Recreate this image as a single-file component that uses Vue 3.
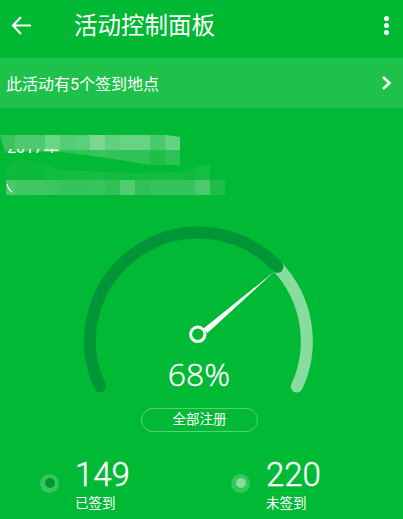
<script setup>
const cell = 15
const upperRows = [
  { y: 135, colors: ['#3cc45f','#4ecb6f','#4ecb6f','#6dd588','#55cd74','#5ad07a','#78d893','#5fd07d','#68d385','#68d385','#48c96a','#65d283'] },
  { y: 150, colors: ['#22bf4c','#2cc254','#2cc254','#35c45b','#2cc254','#30c357','#38c55e','#32c359','#2ec356','#2ec356','#1fbe49','#2cc254'] }
]
const lowerRows = [
  { y: 165, colors: ['#0abb3c','#0cba3b','#0cba3b','#12bc41','#12bc41','#12bc41','#14bd43','#12bc41','#12bc41','#12bc41','#12bc41','#14bd43','#0ebb3e','#14bd43'] },
  { y: 180, colors: ['#4bca6d','#3fc763','#3fc763','#3cc661','#35c45c','#35c45c','#38c55e','#2ec256','#52cc72','#2ec256','#35c45c','#35c45c','#35c45c','#4bca6d','#1fbe49'] }
]
const toBlocks = rows => rows.flatMap(r => r.colors.map((fill, i) => ({ key: `${r.y}-${i}`, x: i * cell, y: r.y - 130, fill })))
const upperBlocks = toBlocks(upperRows)
const lowerBlocks = toBlocks(lowerRows)

const cx = 198.4
const cy = 341
const r = 108.4
const point = deg => {
  const a = (deg - 90) * Math.PI / 180
  return `${(cx + r * Math.cos(a)).toFixed(2)} ${(cy + r * Math.sin(a)).toFixed(2)}`
}
const startDeg = -114.8
const junctionDeg = 46.8
const endDeg = 114.8
const darkArc = `M${point(startDeg)}A${r} ${r} 0 0 1 ${point(junctionDeg)}`
const lightArc = `M${point(junctionDeg)}A${r} ${r} 0 0 1 ${point(endDeg)}`
</script>

<template>
  <div class="page">
    <header class="bar">
      <svg class="back" width="24" height="24" viewBox="0 0 24 24">
        <path d="M21 11.5H3M11 3L3 11.5L11 20" fill="none" stroke="#fff" stroke-width="2.2" />
      </svg>
      <h1 class="title">活动控制面板</h1>
      <div class="dots"><i></i><i></i><i></i></div>
    </header>

    <div class="banner">
      <span>此活动有5个签到地点</span>
      <svg width="12" height="16" viewBox="0 0 12 16">
        <path d="M3 2L9.5 8L3 14" fill="none" stroke="#fff" stroke-width="2.4" />
      </svg>
    </div>

    <svg class="mosaic" width="403" height="70" viewBox="0 0 403 70">
      <defs>
        <clipPath id="mosaic-upper">
          <path d="M0 5H167L180 7V40L133 32L100 27L60 22H5Z" />
        </clipPath>
        <clipPath id="mosaic-lower">
          <path d="M6 65V45C6 36 14 30 22 30L40 32L60 40L133 43L180 42L203 35H210V50H225V65H20Z" />
        </clipPath>
        <clipPath id="text-shape">
          <rect x="0" y="19" width="70" height="4" />
        </clipPath>
      </defs>
      <g clip-path="url(#mosaic-upper)">
        <rect v-for="b in upperBlocks" :key="b.key" :x="b.x" :y="b.y" width="15" height="15" :fill="b.fill" />
      </g>
      <g clip-path="url(#mosaic-lower)">
        <rect x="0" y="28" width="225" height="7" fill="#0cba3b" />
        <rect v-for="b in lowerBlocks" :key="b.key" :x="b.x" :y="b.y" width="15" height="15" :fill="b.fill" />
      </g>
      <text class="hidden-date" x="7" y="23" clip-path="url(#text-shape)">2017年</text>
      <path d="M7 54Q8 59 12 62" fill="none" stroke="#fff" stroke-width="1.2" />
    </svg>

    <svg class="gauge" width="403" height="180" viewBox="0 220 403 180">
      <path :d="lightArc" fill="none" stroke="#88dc9e" stroke-width="12" stroke-linecap="round" />
      <path :d="darkArc" fill="none" stroke="#009638" stroke-width="12" stroke-linecap="round" />
      <polygon points="274.5,271.5 203.5,328.5 207.5,333" fill="#fff" />
      <circle cx="197.8" cy="334.3" r="7.2" fill="#00b934" stroke="#fff" stroke-width="3" />
      <text class="percent" x="199" y="386" text-anchor="middle">68%</text>
    </svg>

    <div class="action"><button class="all">全部注册</button></div>

    <div class="stats">
      <div class="stat">
        <span class="dot dark"></span>
        <div>
          <div class="num">149</div>
          <div class="label">已签到</div>
        </div>
      </div>
      <div class="stat">
        <span class="dot light"></span>
        <div>
          <div class="num">220</div>
          <div class="label">未签到</div>
        </div>
      </div>
    </div>
  </div>
</template>

<style>
html, body { margin: 0; background: #00b934; }
</style>

<style scoped>
.page {
  width: 403px;
  height: 519px;
  overflow: hidden;
  background: #00b934;
  color: #fff;
  font-family: Roboto, "Noto Sans CJK SC", sans-serif;
}
.bar {
  height: 58px;
  display: flex;
  align-items: center;
  padding: 0 14px 6px 10px;
  box-sizing: border-box;
  background: #00b832;
}
.back { flex: none; }
.title {
  flex: 1;
  margin: 0 0 0 40px;
  font-size: 23.5px;
  font-weight: 400;
  line-height: 30px;
}
.dots { display: flex; flex-direction: column; gap: 2px; margin-top: -2px; }
.dots i {
  display: block;
  width: 5px;
  height: 5px;
  border-radius: 50%;
  background: #fff;
}
.banner {
  height: 50px;
  display: flex;
  align-items: center;
  justify-content: space-between;
  padding: 0 11px 0 6px;
  background: #1ec24b;
  font-size: 16px;
}
.mosaic { display: block; margin-top: 22px; }
.hidden-date { font-size: 16px; fill: #fff; }
.gauge { display: block; margin-top: 20px; }
.percent {
  font-family: "Open Sans", sans-serif;
  font-size: 32px;
  font-weight: 300;
  fill: #fff;
  stroke: #fff;
  stroke-width: 0.4px;
}
.action {
  display: flex;
  justify-content: center;
  margin-top: 8px;
  padding-right: 4px;
}
.all {
  width: 117px;
  height: 24px;
  padding: 0;
  border: 1px solid rgba(255, 255, 255, 0.35);
  border-radius: 12px;
  background: transparent;
  color: #fff;
  font: 13.5px/1 Roboto, "Noto Sans CJK SC", sans-serif;
}
.stats {
  display: grid;
  grid-template-columns: 191px 1fr;
  padding: 24px 0 0 40px;
}
.stat { display: flex; align-items: center; gap: 16px; }
.dot {
  width: 19px;
  height: 19px;
  border-radius: 50%;
  background: rgba(255, 255, 255, 0.2);
  flex: none;
  display: flex;
  align-items: center;
  justify-content: center;
  margin-top: -2px;
}
.dot::after {
  content: "";
  width: 10px;
  height: 10px;
  border-radius: 50%;
}
.dot.dark::after { background: #009638; }
.dot.light::after { background: #88dc9e; }
.num {
  font-size: 33px;
  line-height: 38px;
  font-weight: 300;
  -webkit-text-stroke: 0.4px #fff;
}
.label { font-size: 13.5px; line-height: 18px; }
</style>
